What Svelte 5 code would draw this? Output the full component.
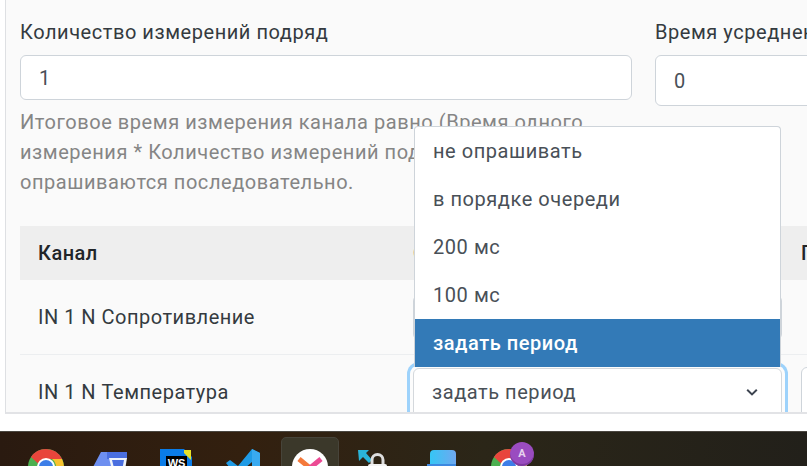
<script>
  const options = ['не опрашивать', 'в порядке очереди', '200 мс', '100 мс', 'задать период'];
  const rows = [
    { name: 'IN 1 N Сопротивление', focused: false },
    { name: 'IN 1 N Температура', focused: true }
  ];
</script>

<div class="screen">
  <main class="page">
    <div class="content">
      <div class="fields">
        <div class="field first">
          <div class="label">Количество измерений подряд</div>
          <div class="input short">1</div>
          <p class="help">Итоговое время измерения канала равно (Время одного<br />измерения * Количество измерений подряд). Каналы<br />опрашиваются последовательно.</p>
        </div>
        <div class="field second">
          <div class="label">Время усреднения</div>
          <div class="input tall">0</div>
        </div>
      </div>

      <div class="table">
        <div class="thead">
          <div class="col-name">Канал</div>
          <div class="col-select">Опрос</div>
          <div class="col-last">Период</div>
        </div>
        {#each rows as row}
          <div class="row" class:active={row.focused}>
            <div class="col-name">{row.name}</div>
            <div class="col-select">
              <div class="select" class:focus={row.focused}>
                <span>задать период</span>
                <svg width="14" height="14" viewBox="0 0 14 14" aria-hidden="true"><path d="M2.2 4.8 7 9.4l4.8-4.6" fill="none" stroke="#3d4450" stroke-width="2"/></svg>
              </div>
            </div>
            {#if row.focused}
              <div class="col-last"><div class="stub"></div></div>
            {/if}
          </div>
        {/each}
      </div>
    </div>

    <ul class="menu">
      {#each options as o, i}
        <li class:selected={i === options.length - 1}>{o}</li>
      {/each}
    </ul>
  </main>

  <div class="gap"></div>

  <footer class="taskbar">
    <svg class="icon chrome-a" width="36" height="36" viewBox="0 0 36 36"><circle cx="18" cy="18" r="18" fill="#4caf50"/><path d="M18 0a18 18 0 0 1 16 10H18a8 8 0 0 0-7.500 5L3 8A18 18 0 0 1 18 0Z" fill="#e8453c"/><path d="M34 10a18 18 0 0 1-14 26l6-14a8 8 0 0 0-2-12Z" fill="#f9c22e"/><circle cx="18" cy="18" r="9" fill="#fff"/><circle cx="18" cy="18" r="7" fill="#3d7ee8"/></svg>
    <svg class="icon folder" width="36" height="36" viewBox="0 0 36 36"><path d="M0 18 8 3h7l5 6v27H0Z" fill="#6d8ff0"/><path d="M14 3h20v7H14Z" fill="#4a6fe0"/><path d="M16 9h18l-2 12H19Z" fill="#eef3fb"/><path d="M19 11h12l-1.500 8H21Z" fill="#4a6fe0"/></svg>
    <svg class="icon webstorm" width="36" height="36" viewBox="0 0 36 36"><path d="M0 0h24l8 8v28H0Z" fill="#0a7ce8"/><path d="M24 1h7v10l-7-7Z" fill="#e7e22a"/><rect x="6" y="7" width="21" height="24" fill="#000"/><text x="16.500" y="18" text-anchor="middle" class="ws">WS</text></svg>
    <svg class="icon vscode" width="36" height="36" viewBox="0 0 36 36"><path d="M0 14 4 11l8 6L26 0l8 4v30l-8 2V13L12 25 4 19Z" fill="#1f9be6"/><path d="M26 0l8 4v32l-8-2Z" fill="#39aaf0"/></svg>
    <div class="running"></div>
    <svg class="icon clock" width="36" height="36" viewBox="0 0 36 36"><circle cx="18" cy="18" r="18" fill="#fff"/><path d="M7 10l11 9 11 9" stroke="#f4793b" stroke-width="5" fill="none"/><path d="M29 10 18 19 7 28" stroke="#ec4b94" stroke-width="5" fill="none"/></svg>
    <svg class="icon lock" width="36" height="36" viewBox="0 0 36 36"><path d="M0 1h11L8 4l6 7-3 3-6-6-4 4Z" fill="#2ab4d8"/><path d="M14 16v-5a5.500 5.500 0 0 1 11 0v5" fill="none" stroke="#ddd" stroke-width="3"/><rect x="10" y="15" width="19" height="18" rx="2" fill="#f2f2f2"/></svg>
    <svg class="icon blue-app" width="36" height="36" viewBox="0 0 36 36"><defs><linearGradient id="bg" x1="0" y1="0" x2="1" y2="0"><stop offset="0" stop-color="#35c6f5"/><stop offset="1" stop-color="#6fa8f0"/></linearGradient></defs><rect x="3" y="1" width="26" height="22" rx="4" fill="url(#bg)"/><path d="M0 15h29v21H0Z" fill="#3d88e0"/></svg>
    <svg class="icon chrome-b" width="36" height="36" viewBox="0 0 36 36"><circle cx="18" cy="18" r="18" fill="#4caf50"/><path d="M18 0a18 18 0 0 1 16 10H18a8 8 0 0 0-7.500 5L3 8A18 18 0 0 1 18 0Z" fill="#e8453c"/><path d="M34 10a18 18 0 0 1-14 26l6-14a8 8 0 0 0-2-12Z" fill="#f9c22e"/><circle cx="18" cy="18" r="9" fill="#fff"/><circle cx="18" cy="18" r="7" fill="#3d7ee8"/></svg>
    <div class="avatar">A</div>
  </footer>
</div>

<style>
  :global(body) {
    margin: 0;
    background: #fff;
    overflow: hidden;
  }

  .screen {
    width: 807px;
    height: 466px;
    display: flex;
    flex-direction: column;
    font-family: Roboto, "Liberation Sans", sans-serif;
    font-size: 20px;
    letter-spacing: 0.55px;
    color: #343a40;
  }

  .page {
    position: relative;
    height: 414px;
    box-sizing: border-box;
    flex: none;
  }

  .content {
    height: 414px;
    box-sizing: border-box;
    margin-left: 5px;
    padding: 19px 0 0 14px;
    background: #fafafa;
    border-left: 1px solid #dee0e3;
    border-bottom: 2px solid #e2e3e6;
    overflow: hidden;
  }

  .fields {
    display: flex;
    width: 900px;
    gap: 23px;
  }

  .field.first { width: 612px; flex: none; }
  .field.second { flex: 1; }

  .label {
    line-height: 26px;
    margin-bottom: 10px;
    white-space: nowrap;
  }

  .input {
    box-sizing: border-box;
    background: #fff;
    border: 1px solid #ced4da;
    border-radius: 6px;
    padding-left: 18px;
    color: #495057;
    display: flex;
    align-items: center;
  }

  .input.short { height: 45px; }
  .input.tall { height: 51px; }

  .help {
    margin: 7px 0 0;
    line-height: 30px;
    color: #858585;
    white-space: nowrap;
  }

  .table {
    margin-top: 29px;
    width: 900px;
  }

  .thead, .row {
    display: grid;
    grid-template-columns: 393px 374px 1fr;
    align-items: center;
  }

  .thead {
    height: 54px;
    background: #eeeeee;
    font-weight: 500;
    color: #212529;
  }

  .row {
    height: 75px;
    border-bottom: 1px solid #eceef0;
    box-sizing: border-box;
  }

  .row.active { align-items: start; height: 80px; }
  .row.active .col-name { padding-top: 25px; }

  .col-name { padding-left: 18px; white-space: nowrap; letter-spacing: 0.5px; }
  .col-last { padding-left: 14px; }

  .row.active .col-select { padding-top: 13px; }

  .select {
    box-sizing: border-box;
    width: 369px;
    height: 45px;
    background: #fff;
    border: 1px solid #ced4da;
    border-radius: 6px;
    padding: 0 22px 0 18px;
    display: flex;
    justify-content: space-between;
    align-items: center;
    color: #495057;
  }

  .select.focus {
    border-color: #d4d8dc;
    box-shadow: 0 0 0 3px #fcfcfc, 0 0 0 6px #9dd2fb;
  }

  .row.active .select { height: 60px; padding-bottom: 12px; }

  .stub {
    box-sizing: border-box;
    width: 100px;
    height: 51px;
    margin-top: 12px;
    background: #fff;
    border: 1px solid #ced4da;
    border-radius: 6px;
  }

  .menu {
    position: absolute;
    left: 414px;
    top: 126px;
    width: 367px;
    box-sizing: border-box;
    margin: 0;
    padding: 0;
    list-style: none;
    background: #fff;
    border: 1px solid #ced4da;
    border-bottom: 0;
    border-radius: 4px 4px 0 0;
    color: #495057;
  }

  .menu li {
    height: 48px;
    padding-left: 18px;
    display: flex;
    align-items: center;
  }

  .menu li.selected {
    background: #337ab7;
    color: #fff;
    font-weight: 500;
  }

  .gap {
    height: 17px;
    background: #fff;
    flex: none;
  }

  .taskbar {
    position: relative;
    flex: 1;
    overflow: hidden;
    background: linear-gradient(90deg, #2a1a10 0%, #33200f 30%, #2b2618 60%, #22201a 100%);
    border-top: 1px solid #4a4640;
  }

  .icon { position: absolute; top: 17px; }
  .chrome-a { left: 28px; }
  .folder { left: 93px; }
  .webstorm { left: 160px; }
  .vscode { left: 226px; }
  .clock { left: 292px; }
  .lock { left: 358px; }
  .blue-app { left: 427px; }
  .chrome-b { left: 491px; }

  .ws {
    font: 700 11px "Liberation Sans", sans-serif;
    letter-spacing: 0;
    fill: #fff;
  }

  .running {
    position: absolute;
    left: 281px;
    top: 5px;
    width: 58px;
    height: 40px;
    box-sizing: border-box;
    background: #3b382a;
    border: 1px solid #47443a;
    border-radius: 5px;
  }

  .avatar {
    position: absolute;
    left: 510px;
    top: 10px;
    width: 24px;
    height: 24px;
    border-radius: 50%;
    background: #9a4cc0;
    box-shadow: inset 0 -2px 0 #7d3aa0;
    color: #e6d2ee;
    font: 700 11px/24px Roboto, sans-serif;
    letter-spacing: 0;
    text-align: center;
  }
</style>
